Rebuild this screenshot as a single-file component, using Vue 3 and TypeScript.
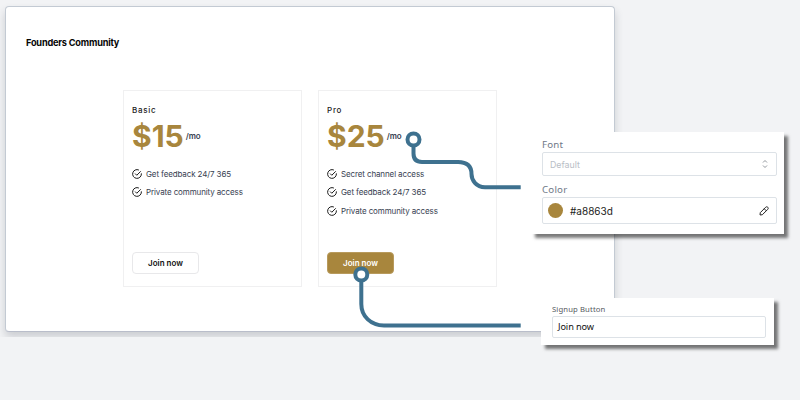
<script setup lang="ts">
interface Plan {
  name: string
  price: string
  features: string[]
  primary: boolean
}

const plans: Plan[] = [
  {
    name: 'Basic',
    price: '$15',
    features: ['Get feedback 24/7 365', 'Private community access'],
    primary: false,
  },
  {
    name: 'Pro',
    price: '$25',
    features: ['Secret channel access', 'Get feedback 24/7 365', 'Private community access'],
    primary: true,
  },
]
</script>

<template>
  <div class="page">
    <div class="stage">
      <main class="window">
        <h1 class="title">Founders Community</h1>
        <div class="plans">
          <section v-for="plan in plans" :key="plan.name" class="plan">
            <h2 class="name">{{ plan.name }}</h2>
            <div class="price">
              <span class="amount">{{ plan.price }}</span>
              <span class="period">/mo</span>
            </div>
            <ul class="features">
              <li v-for="feature in plan.features" :key="feature">
                <svg class="check" viewBox="0 0 24 24">
                  <path d="M22.500 10.500v1.500a10.500 10.500 0 1 1-6-9.500" />
                  <path d="M21 5.500 11.500 15l-4-4" />
                </svg>
                <span class="feature">{{ feature }}</span>
              </li>
            </ul>
            <button class="join" :class="{ primary: plan.primary }">Join now</button>
          </section>
        </div>
      </main>
    </div>

    <svg class="connectors" viewBox="0 0 800 400">
      <path d="M413.500 145V153.500Q413.500 162 422 162H458C468 162 471.500 167 471.500 174C471.500 180 476 187.200 485 187.200H520.700" />
      <circle cx="413.500" cy="139.500" r="6" />
      <path d="M361.300 281V304C361.300 316.500 371 325.400 384 325.400H520.700" />
      <circle cx="361.300" cy="274.500" r="6" />
    </svg>

    <aside class="popup style-popup">
      <label class="label">Font</label>
      <div class="field select">
        <span class="placeholder">Default</span>
        <svg class="chevrons" viewBox="0 0 8 10"><path d="M2 3.500 4 1.500 6 3.500M2 6.500 4 8.500 6 6.500" /></svg>
      </div>
      <label class="label second">Color</label>
      <div class="field color">
        <span class="swatch"></span>
        <span class="hex">#a8863d</span>
        <svg class="dropper" viewBox="0 0 24 24">
          <path d="M2.500 21.500 3 16 16 3c1.500-1.500 3.500-1.500 5 0s1.500 3.500 0 5L8 21z" />
          <path d="m12.500 6.500 5 5" />
        </svg>
      </div>
    </aside>

    <aside class="popup button-popup">
      <label class="label">Signup Button</label>
      <div class="field">Join now</div>
    </aside>
  </div>
</template>

<style>
body {
  margin: 0;
  background: #f2f3f5;
}
</style>

<style scoped>
* {
  box-sizing: border-box;
}
.page {
  position: relative;
  width: 800px;
  height: 400px;
  overflow: hidden;
  background: #f2f3f5;
  font-family: Inter, "Liberation Sans", sans-serif;
}
.stage {
  width: 625px;
  height: 337px;
  padding: 6px 0 0 5px;
  overflow: hidden;
}
.window {
  width: 610px;
  height: 326px;
  padding: 28px 20px 0;
  background: #fff;
  border: 1px solid #c3cad3;
  border-bottom-color: #b9bdca;
  border-radius: 4px;
  box-shadow: 0 5px 9px rgba(50, 54, 70, 0.2);
}
.title {
  margin: 0;
  height: 16px;
  font-size: 9.200px;
  line-height: 16px;
  font-weight: 700;
  letter-spacing: -0.2px;
  color: #050505;
  white-space: nowrap;
}
.plans {
  display: flex;
  gap: 16px;
  margin: 39px 0 0 97px;
}
.plan {
  width: 179px;
  height: 197px;
  padding: 13px 8px 12px;
  border: 1px solid #f0f0f1;
  display: flex;
  flex-direction: column;
  align-items: flex-start;
}
.name {
  margin: 0;
  height: 12px;
  font-size: 8px;
  line-height: 12px;
  font-weight: 500;
  letter-spacing: 0.75px;
  color: #222;
}
.price {
  display: flex;
  align-items: center;
  height: 36px;
  margin-top: 2px;
}
.amount {
  font-size: 30px;
  line-height: 36px;
  font-weight: 700;
  font-kerning: none;
  color: #a8863d;
}
.period {
  margin-left: 2px;
  font-size: 8px;
  font-weight: 600;
  letter-spacing: -0.1px;
  color: #374151;
}
.features {
  list-style: none;
  margin: 11px 0 0;
  padding: 0;
}
.features li {
  display: flex;
  align-items: center;
  gap: 4px;
  height: 18.300px;
}
.check {
  width: 10px;
  height: 10px;
  overflow: visible;
  fill: none;
  stroke: #111;
  stroke-width: 2.300;
}
.feature {
  font-size: 8px;
  line-height: 12px;
  letter-spacing: -0.12px;
  color: #374151;
  white-space: nowrap;
}
.join {
  margin-top: auto;
  width: 67px;
  height: 22px;
  padding: 0;
  border: 1px solid #e8e8ea;
  border-radius: 4px;
  background: #fff;
  color: #111;
  font: 600 8px/20px Inter, sans-serif;
}
.join.primary {
  background: #a8863d;
  border-color: #b89a5c;
  color: #fff;
}
.connectors {
  position: absolute;
  inset: 0;
  width: 800px;
  height: 400px;
  fill: none;
  stroke: #3e718f;
  stroke-width: 4;
}
.connectors circle {
  fill: #fff;
}
.popup {
  position: absolute;
  background: #fff;
  display: flex;
  flex-direction: column;
  box-shadow: 4px 4px 3px rgba(0, 0, 0, 0.52);
}
.style-popup {
  left: 531px;
  top: 132px;
  width: 253px;
  height: 101.500px;
  padding: 6px 7px 0 11px;
}
.button-popup {
  left: 541px;
  top: 298px;
  width: 233px;
  height: 47px;
  padding: 5px 8px 0 11px;
}
.label {
  height: 14px;
  font: 400 9.700px/14px "Noto Sans", sans-serif;
  letter-spacing: 0.2px;
  color: #707887;
}
.label.second {
  margin-top: 7px;
}
.field {
  display: flex;
  align-items: center;
  border: 1px solid #dde2e7;
  border-radius: 2px;
}
.select {
  height: 24px;
  margin-top: 0;
  padding: 0 7px;
}
.placeholder {
  flex: 1;
  font-size: 8.800px;
  color: #b9bec6;
}
.chevrons {
  width: 8px;
  height: 10px;
  fill: none;
  stroke: #868b92;
  stroke-width: 0.9;
}
.color {
  height: 27px;
  padding: 0 7px 0 5px;
}
.swatch {
  width: 15px;
  height: 15px;
  border-radius: 50%;
  background: #a8863d;
}
.hex {
  flex: 1;
  margin-left: 7px;
  font-size: 10px;
  color: #1b1c20;
}
.dropper {
  width: 10px;
  height: 10px;
  fill: none;
  stroke: #222;
  stroke-width: 2.400;
}
.button-popup .label {
  font-size: 7.700px;
  height: 13px;
  line-height: 13px;
  letter-spacing: 0.12px;
  color: #555960;
}
.button-popup .field {
  height: 22px;
  padding-left: 5px;
  font: 400 9.200px/20px "Noto Sans", sans-serif;
  letter-spacing: -0.1px;
  color: #111;
}
</style>
